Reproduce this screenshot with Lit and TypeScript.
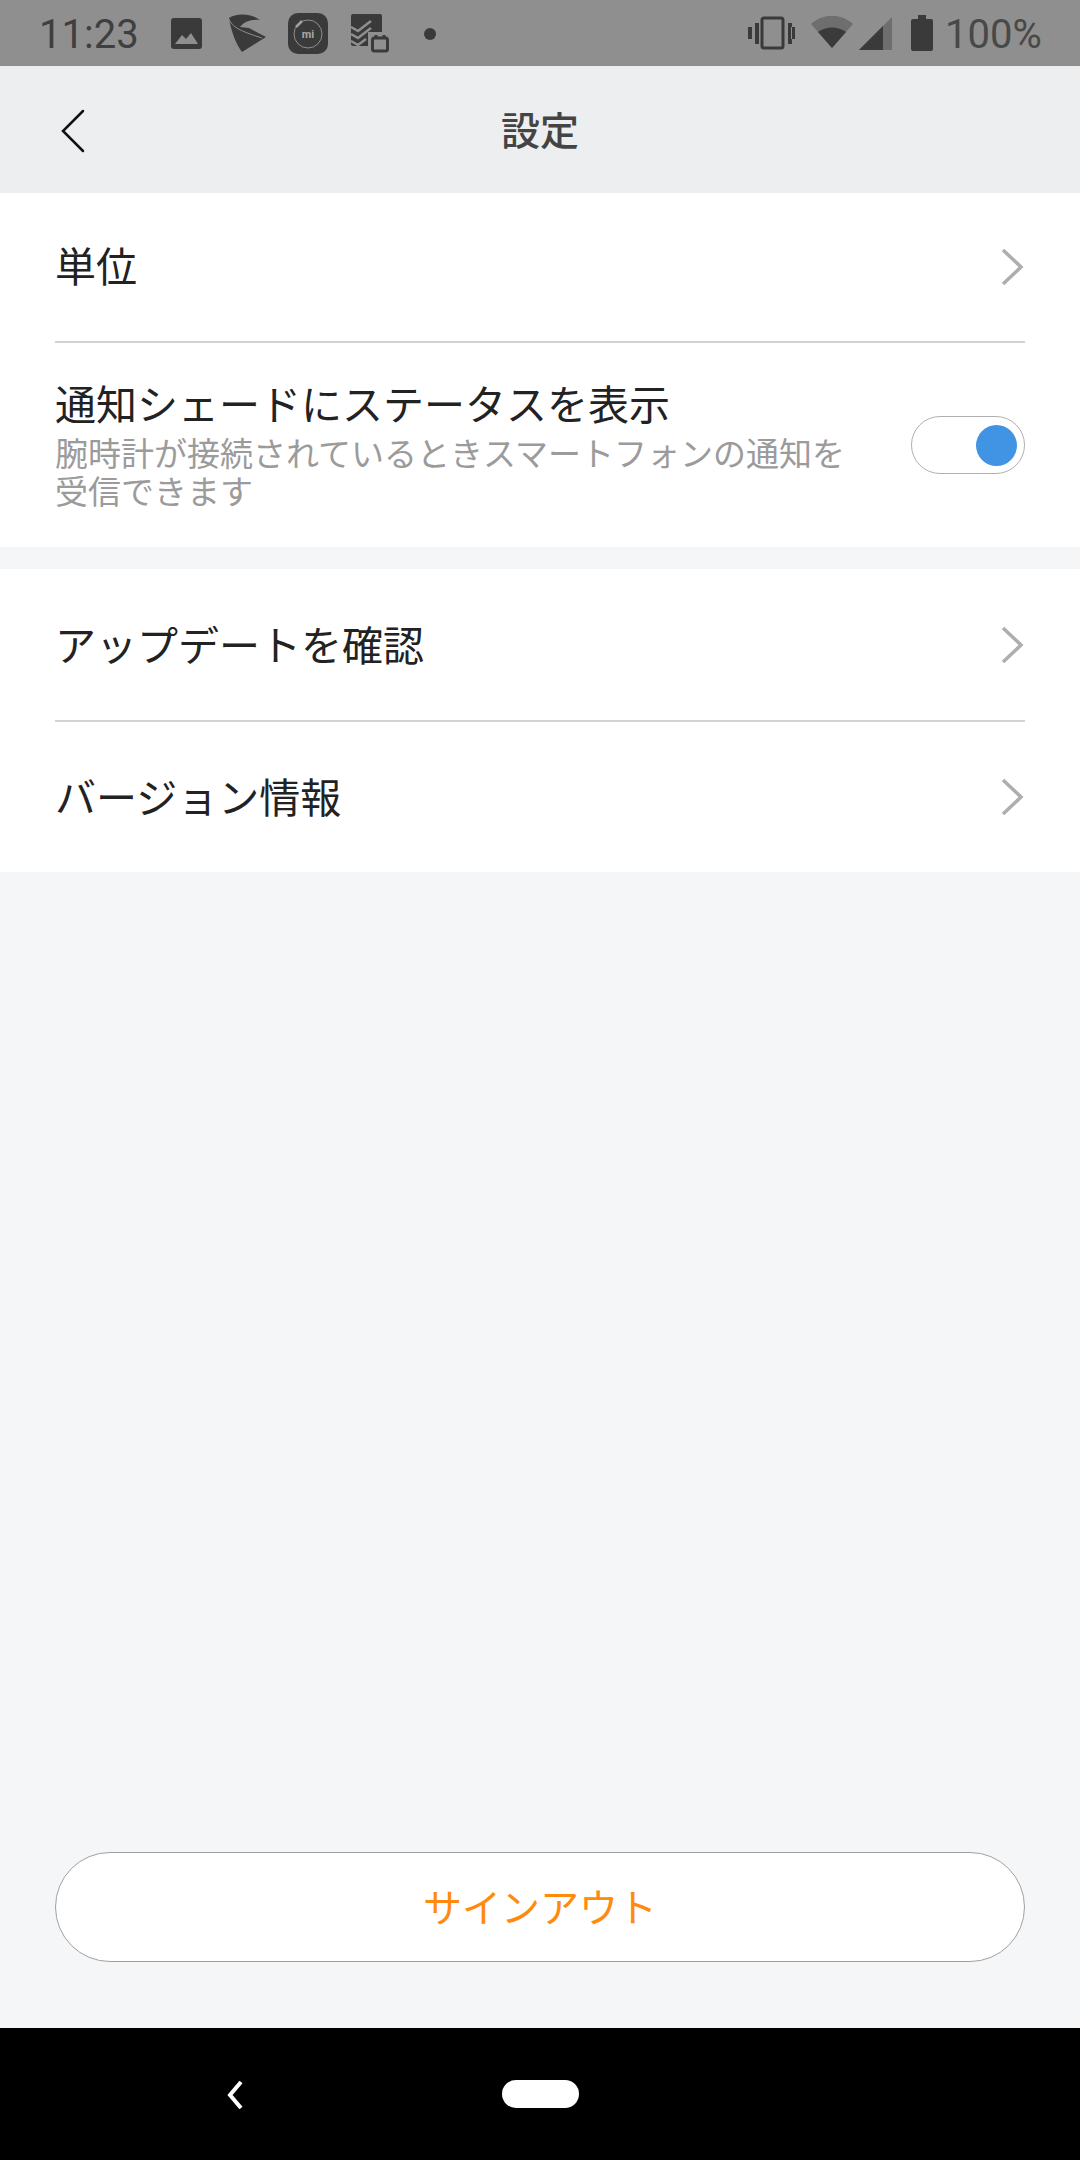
import { LitElement, css, html, svg } from "lit";
import { customElement } from "lit/decorators.js";

const chevron = html`<svg class="chev" width="24" height="38" viewBox="0 0 24 38">
  <path d="M3 2l18 17L3 36" fill="none" stroke="#aeaeae" stroke-width="3.5" />
</svg>`;

const statusLeft = svg`
  <rect x="171" y="18" width="31" height="31" rx="3" fill="#3a3a3a" />
  <path d="M175 44l7-9 4 4 5-6 7 11z" fill="#8f8f8f" />
  <path d="M229 18c7-5 22-5 31 2-9-1-16 2-20 7l9 1 17 9-24 15c-6-8-11-21-13-34z" fill="#3a3a3a" />
  <path d="M229 19c3 8 11 12 33 19" fill="none" stroke="#8f8f8f" stroke-width="1" />
  <rect x="288" y="13" width="40" height="41" rx="10" fill="#3a3a3a" />
  <circle cx="308" cy="34" r="14" fill="none" stroke="#8f8f8f" stroke-width="1" />
  <text x="308" y="38" text-anchor="middle" font-size="11" font-weight="700" fill="#a8a8a8">mi</text>
  <path d="M296 27l6-6" stroke="#a0a0a0" stroke-width="2.5" />
  <rect x="351" y="14" width="31" height="32" rx="2" fill="#3a3a3a" />
  <path d="M351 27l7 4 13-10M351 34l7 4 13-10M351 41l7 4 8-6" fill="none" stroke="#8f8f8f" stroke-width="2.5" />
  <rect x="368" y="32" width="24" height="24" fill="#8f8f8f" />
  <rect x="372.5" y="38" width="15" height="13" rx="2" fill="none" stroke="#3a3a3a" stroke-width="3" />
  <path d="M376 38v-3M384 38v-3" stroke="#3a3a3a" stroke-width="3" />
  <circle cx="430" cy="34" r="6" fill="#3a3a3a" />
`;

const statusRight = svg`
  <path d="M748 27h4v12h-4zM755 23h4v21h-4zM788 23h4v21h-4zM795 27h-4v12h4z" fill="#3a3a3a" />
  <rect x="762" y="18" width="21" height="30" rx="2" fill="none" stroke="#3a3a3a" stroke-width="3" />
  <path d="M811 24c12-11 30-11 42 0l-21 24z" fill="#6e6e6e" />
  <path d="M818 32c8-6 20-6 28 0l-14 16z" fill="#3a3a3a" />
  <path d="M892 17v33h-33z" fill="#6e6e6e" />
  <path d="M883 26v24h-24z" fill="#3a3a3a" />
  <path d="M918 15h8v4h5a2 2 0 0 1 2 2v28a2 2 0 0 1-2 2h-18a2 2 0 0 1-2-2V21a2 2 0 0 1 2-2h5z" fill="#3a3a3a" />
`;

@customElement("app-root")
export class AppRoot extends LitElement {
  static styles = css`
    :host {
      display: flex;
      flex-direction: column;
      height: 2160px;
      background: #f5f6f8;
      font-family: Roboto, "Noto Sans CJK JP", sans-serif;
      color: #222;
    }
    .status {
      position: relative;
      height: 66px;
      flex: none;
      background: #8f8f8f;
      color: #3f3f3f;
      font-size: 40px;
    }
    .status svg {
      position: absolute;
      inset: 0;
    }
    .status span {
      position: absolute;
      top: 11px;
      line-height: 47px;
    }
    .clock {
      left: 39px;
    }
    .battery {
      left: 945px;
      color: #484848;
    }
    .bar {
      height: 127px;
      flex: none;
      display: flex;
      align-items: center;
      justify-content: center;
      position: relative;
      background: #edeef0;
      font-size: 39px;
      font-weight: 500;
      color: #444;
      padding-bottom: 4px;
      box-sizing: border-box;
    }
    .back {
      position: absolute;
      left: 60px;
      top: 43px;
    }
    .section {
      background: #fff;
      flex: none;
      padding: 0 55px;
    }
    .section + .section {
      margin-top: 22px;
    }
    .row {
      display: flex;
      align-items: center;
      justify-content: space-between;
      font-size: 41px;
      line-height: 48px;
      box-sizing: border-box;
    }
    .row > span {
      padding-top: 4px;
    }
    .tall {
      height: 150px;
      border-bottom: 2px solid #d2d2d2;
    }
    .tall > span {
      padding-top: 2px;
    }
    .mid {
      height: 153px;
      border-bottom: 2px solid #d2d2d2;
    }
    .plain {
      height: 150px;
    }
    .chev {
      margin-right: 1px;
      flex: none;
    }
    .notify {
      height: 204px;
    }
    .copy {
      width: 800px;
      padding-top: 4px;
    }
    .sub {
      margin-top: 6px;
      font-size: 33px;
      line-height: 38px;
      color: #9b9b9b;
    }
    .toggle {
      width: 114px;
      height: 58px;
      box-sizing: border-box;
      border: 1.5px solid #b0b0b0;
      border-radius: 29px;
      display: flex;
      align-items: center;
      justify-content: flex-end;
      padding-right: 7px;
      flex: none;
    }
    .knob {
      width: 41px;
      height: 41px;
      border-radius: 50%;
      background: #4193e4;
    }
    .spacer {
      flex: 1;
    }
    .signout {
      margin: 0 55px 66px;
      height: 110px;
      box-sizing: border-box;
      flex: none;
      background: #fff;
      border: 1.5px solid #a0a0a0;
      border-radius: 55px;
      display: flex;
      align-items: center;
      justify-content: center;
      font-size: 39px;
      color: #ff8a0c;
      padding-bottom: 5px;
    }
    .nav {
      height: 132px;
      flex: none;
      background: #000;
      position: relative;
    }
    .nav-back {
      position: absolute;
      left: 224px;
      top: 53px;
    }
    .home {
      position: absolute;
      left: 502px;
      top: 52px;
      width: 77px;
      height: 28px;
      border-radius: 14px;
      background: #fff;
    }
  `;

  render() {
    return html`
      <div class="status">
        <svg width="1080" height="66" viewBox="0 0 1080 66">${statusLeft}${statusRight}</svg>
        <span class="clock">11:23</span>
        <span class="battery">100%</span>
      </div>
      <div class="bar">
        <svg class="back" width="26" height="44" viewBox="0 0 26 44">
          <path d="M23 2L3 22l20 20" fill="none" stroke="#111" stroke-width="2.5" stroke-linecap="round" />
        </svg>
        設定
      </div>
      <div class="section">
        <div class="row tall"><span>単位</span>${chevron}</div>
        <div class="row notify">
          <div class="copy">
            <div>通知シェードにステータスを表示</div>
            <div class="sub">腕時計が接続されているときスマートフォンの通知を受信できます</div>
          </div>
          <div class="toggle"><div class="knob"></div></div>
        </div>
      </div>
      <div class="section">
        <div class="row mid"><span>アップデートを確認</span>${chevron}</div>
        <div class="row plain"><span>バージョン情報</span>${chevron}</div>
      </div>
      <div class="spacer"></div>
      <div class="signout">サインアウト</div>
      <div class="nav">
        <svg class="nav-back" width="22" height="28" viewBox="0 0 22 28">
          <path d="M17 1L6 14l11 13" fill="none" stroke="#fff" stroke-width="4" />
        </svg>
        <div class="home"></div>
      </div>
    `;
  }
}
